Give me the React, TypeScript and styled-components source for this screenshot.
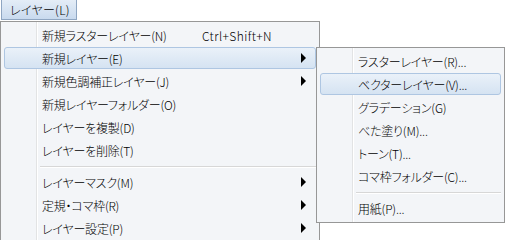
import styled, { createGlobalStyle } from 'styled-components'

const GlobalStyle = createGlobalStyle`
  html, body {
    margin: 0;
    padding: 0;
    background: #ffffff;
    overflow: hidden;
  }
  body {
    font-family: "Noto Sans CJK JP", "Noto Sans", sans-serif;
    font-size: 12px;
    font-weight: 300;
    font-feature-settings: "palt";
    color: #000;
  }
`

const Screen = styled.div`
  width: 506px;
  height: 240px;
  position: relative;
  overflow: hidden;
`

const MenuBar = styled.div`
  display: flex;
  height: 21px;
  padding-left: 1px;
`

const MenuTitle = styled.div`
  box-sizing: border-box;
  width: 76px;
  height: 20px;
  padding-left: 8px;
  display: flex;
  align-items: center;
  border: 1px solid #8fa6c2;
  border-top: none;
  background: linear-gradient(#e4edf7, #c9daee);
  letter-spacing: 0.3px;
`

const Popup = styled.div<{ $width: number }>`
  position: relative;
  box-sizing: border-box;
  width: ${(p) => p.$width}px;
  padding: 2px 3px;
  border: 1px solid #979797;
  background: #f3f5f8;
  display: flex;
  flex-direction: column;

  &::before {
    content: '';
    position: absolute;
    top: 0;
    bottom: 0;
    left: 35px;
    width: 1px;
    background: #e2e3e4;
    box-shadow: 1px 0 0 #ffffff;
  }
`

const MainMenu = styled(Popup)`
  height: 230px;
  border-bottom: none;
`

const SubMenu = styled(Popup)`
  position: absolute;
  left: 316px;
  top: 47px;
`

const Item = styled.div<{ $active?: boolean }>`
  position: relative;
  z-index: 1;
  box-sizing: border-box;
  height: 22px;
  margin-bottom: 1px;
  padding-left: 37px;
  padding-right: 8px;
  display: flex;
  align-items: center;
  border: 1px solid ${(p) => (p.$active ? '#aec6e2' : 'transparent')};
  border-radius: 3px;
  background: ${(p) => (p.$active ? 'linear-gradient(#eaf1f9, #d5e3f2)' : 'transparent')};
  white-space: nowrap;
`

const Label = styled.span`
  flex: 0 0 auto;
  letter-spacing: -0.2px;
`

const Shortcut = styled.span`
  margin-left: auto;
  width: 105px;
  letter-spacing: 0.4px;
`

const Arrow = styled.span`
  margin-left: auto;
  width: 0;
  height: 0;
  margin-right: 1px;
  border-top: 5px solid transparent;
  border-bottom: 5px solid transparent;
  border-left: 5px solid #000;
`

const Separator = styled.div`
  position: relative;
  z-index: 1;
  height: 9px;
  margin-left: 36px;
  display: flex;
  align-items: center;

  &::after {
    content: '';
    flex: 1;
    height: 1px;
    background: #d7d7d7;
    box-shadow: 0 1px 0 #ffffff;
  }
`

type Entry = { label: string; shortcut?: string; sub?: boolean; active?: boolean } | 'sep'

const mainItems: Entry[] = [
  { label: '新規ラスターレイヤー(N)', shortcut: 'Ctrl+Shift+N' },
  { label: '新規レイヤー(E)', sub: true, active: true },
  { label: '新規色調補正レイヤー(J)', sub: true },
  { label: '新規レイヤーフォルダー(O)' },
  { label: 'レイヤーを複製(D)' },
  { label: 'レイヤーを削除(T)' },
  'sep',
  { label: 'レイヤーマスク(M)', sub: true },
  { label: '定規・コマ枠(R)', sub: true },
  { label: 'レイヤー設定(P)', sub: true },
]

const subItems: Entry[] = [
  { label: 'ラスターレイヤー(R)...' },
  { label: 'ベクターレイヤー(V)...', active: true },
  { label: 'グラデーション(G)' },
  { label: 'べた塗り(M)...' },
  { label: 'トーン(T)...' },
  { label: 'コマ枠フォルダー(C)...' },
  'sep',
  { label: '用紙(P)...' },
]

const renderItems = (items: Entry[]) =>
  items.map((it, i) =>
    it === 'sep' ? (
      <Separator key={i} />
    ) : (
      <Item key={i} $active={it.active}>
        <Label>{it.label}</Label>
        {it.shortcut && <Shortcut>{it.shortcut}</Shortcut>}
        {it.sub && <Arrow />}
      </Item>
    )
  )

const App = () => {
  return (
    <Screen>
      <GlobalStyle />
      <MenuBar>
        <MenuTitle>レイヤー(L)</MenuTitle>
      </MenuBar>
      <MainMenu $width={320}>{renderItems(mainItems)}</MainMenu>
      <SubMenu $width={189}>{renderItems(subItems)}</SubMenu>
    </Screen>
  )
}

export default App
